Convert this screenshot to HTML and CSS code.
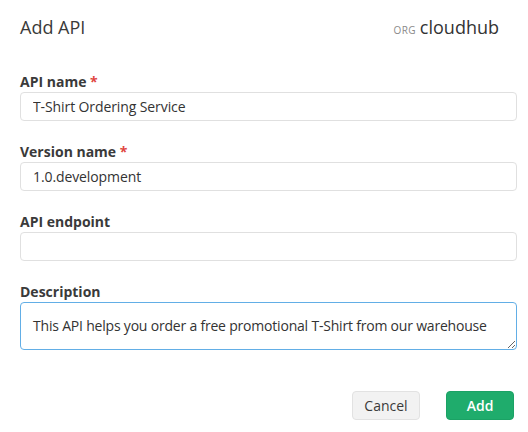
FILE: index.html
```html
<!DOCTYPE html>
<html>
<head>
<meta charset="utf-8">
<link rel="stylesheet" href="styles.css">
</head>
<body>
<div class="dialog">
  <div class="header">
    <h1 class="title">Add API</h1>
    <div class="org"><span class="org-label">ORG</span> <span class="org-name">cloudhub</span></div>
  </div>
  <form class="form">
    <div class="field">
      <label class="label">API name <span class="req">*</span></label>
      <input class="input" type="text" value="T-Shirt Ordering Service">
    </div>
    <div class="field">
      <label class="label">Version name <span class="req">*</span></label>
      <input class="input" type="text" value="1.0.development">
    </div>
    <div class="field">
      <label class="label">API endpoint</label>
      <input class="input" type="text" value="">
    </div>
    <div class="field">
      <label class="label">Description</label>
      <textarea class="textarea">This API helps you order a free promotional T-Shirt from our warehouse</textarea>
    </div>
    <div class="actions">
      <button type="button" class="btn btn-cancel">Cancel</button>
      <button type="button" class="btn btn-add">Add</button>
    </div>
  </form>
</div>
</body>
</html>
```
FILE: styles.css
```css
html, body {
  margin: 0;
  padding: 0;
  background: #ffffff;
}
body {
  font-family: "Open Sans", "Liberation Sans", sans-serif;
  color: #333333;
}
.dialog {
  padding: 13px 11px 0 20px;
}
.header {
  display: flex;
  justify-content: space-between;
  align-items: baseline;
  height: 28px;
  padding-right: 18px;
}
.title {
  margin: 0;
  font-size: 18px;
  font-weight: 400;
  line-height: 28px;
  color: #3a3a3a;
}
.org {
  line-height: 28px;
}
.org-label {
  font-size: 10px;
  color: #8a8a8a;
  letter-spacing: 0.3px;
}
.org-name {
  font-size: 18px;
  color: #333333;
}
.form {
  margin-top: 31px;
  display: flex;
  flex-direction: column;
}
.field {
  display: flex;
  flex-direction: column;
  margin-bottom: 21px;
}
.label {
  font-size: 14px;
  font-weight: 700;
  line-height: 20px;
  color: #3a3a3a;
}
.req {
  color: #e0453f;
}
.input, .textarea {
  box-sizing: border-box;
  width: 100%;
  font-family: "Open Sans", "Liberation Sans", sans-serif;
  font-size: 14px;
  color: #333333;
  border: 1px solid #e0e0e0;
  border-radius: 4px;
  background: #ffffff;
  outline: none;
  margin: 0;
}
.input {
  height: 29px;
  padding: 0 12px;
  line-height: 27px;
  letter-spacing: -0.1px;
}
.textarea {
  height: 48px;
  padding: 13px 12px 0 12px;
  line-height: 20px;
  letter-spacing: -0.2px;
  border-color: #62aee6;
  resize: vertical;
  overflow: hidden;
  display: block;
}
.actions {
  display: flex;
  justify-content: flex-end;
  gap: 26px;
  margin-top: 20px;
  padding-right: 3px;
}
.btn {
  box-sizing: border-box;
  width: 68px;
  height: 29px;
  border-radius: 4px;
  font-family: "Open Sans", "Liberation Sans", sans-serif;
  font-size: 14px;
  padding: 0;
  cursor: pointer;
}
.btn-cancel {
  background: #f2f2f2;
  border: 1px solid #e2e2e2;
  color: #3a3a3a;
}
.btn-add {
  background: #1fac6c;
  border: 1px solid #1ba265;
  color: #ffffff;
  font-weight: 600;
}
```
